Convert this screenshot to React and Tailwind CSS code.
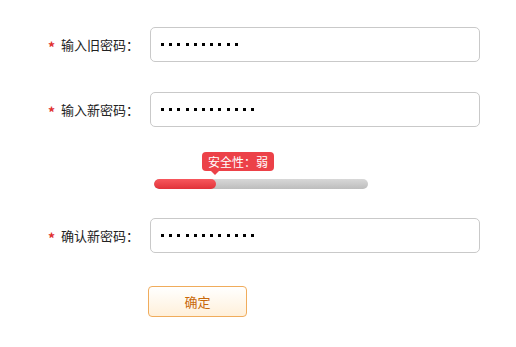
import React from 'react';

const font = { fontFamily: '"Noto Sans CJK SC", "DejaVu Sans", sans-serif' };

const Row = ({ label, dots, className = '' }) => (
  <div className={`flex items-center ${className}`}>
    <span className="w-[13px] text-[14px] font-bold text-[#e03030] leading-none pt-[4px]">*</span>
    <span className="w-[89px] text-[13px] text-[#222] leading-none">{label}</span>
    <div className="w-[330px] h-[35px] border border-[#c9c9c9] rounded-[5px] bg-white flex items-center gap-[5.2px] pl-[10px]">
      {Array.from({ length: dots }).map((_, i) => (
        <span key={i} className="w-[3px] h-[3px] bg-black" />
      ))}
    </div>
  </div>
);

export default function App() {
  return (
    <div className="w-[516px] h-[347px] bg-white pl-[48px] pt-[27px]" style={font}>
      <Row label="输入旧密码：" dots={10} />
      <Row label="输入新密码：" dots={12} className="mt-[30px]" />

      <div className="ml-[106px] mt-[25px] relative h-[38px] w-[214px]">
        <div className="absolute left-[48px] top-0 h-[19px] px-[6px] rounded-[4px] bg-[#ec4148] text-white text-[12px] leading-[19px] whitespace-nowrap">
          安全性：弱
          <span className="absolute left-[9px] top-[19px] w-0 h-0 border-l-[4px] border-r-[4px] border-t-[4px] border-l-transparent border-r-transparent border-t-[#ec4148]" />
        </div>
        <div className="absolute left-0 top-[27px] w-[214px] h-[10px] rounded-full bg-gradient-to-b from-[#d8d8d8] to-[#bdbdbd] overflow-hidden">
          <div className="h-full w-[62px] rounded-full bg-gradient-to-b from-[#f7575d] to-[#e13239]" />
        </div>
      </div>

      <Row label="确认新密码：" dots={12} className="mt-[28px]" />

      <div className="ml-[100px] mt-[33px] w-[99px] h-[31px] rounded-[4px] border border-[#f0ac5c] bg-gradient-to-b from-white to-[#fff0da] flex items-center justify-center text-[13px] text-[#c8680a]">
        确定
      </div>
    </div>
  );
}
